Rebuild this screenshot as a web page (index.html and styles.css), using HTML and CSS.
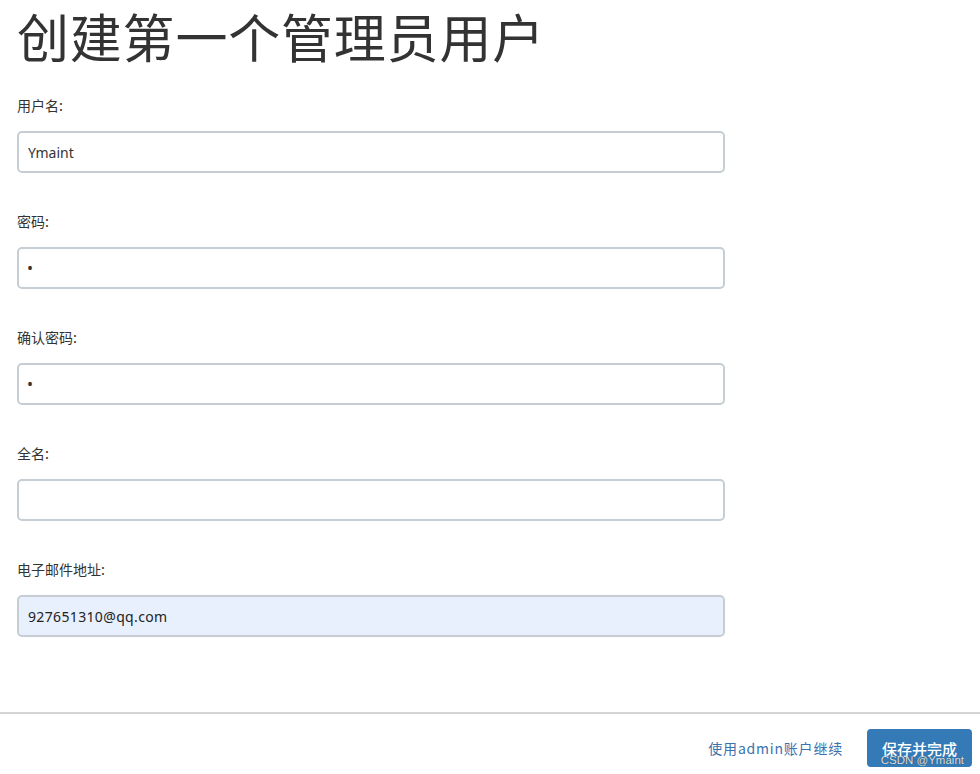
FILE: index.html
```html
<!DOCTYPE html>
<html lang="zh-CN">
<head>
<meta charset="utf-8">
<title>创建第一个管理员用户</title>
<link rel="stylesheet" href="styles.css">
</head>
<body>
<div class="page">
  <main class="content">
    <h1 class="title">创建第一个管理员用户</h1>
    <form class="form">
      <div class="field">
        <label class="label">用户名:</label>
        <input class="input" type="text" value="Ymaint">
      </div>
      <div class="field">
        <label class="label">密码:</label>
        <input class="input" type="password" value="a">
      </div>
      <div class="field">
        <label class="label">确认密码:</label>
        <input class="input" type="password" value="a">
      </div>
      <div class="field">
        <label class="label">全名:</label>
        <input class="input" type="text" value="">
      </div>
      <div class="field">
        <label class="label">电子邮件地址:</label>
        <input class="input input-autofill" type="text" value="927651310@qq.com">
      </div>
    </form>
  </main>
  <footer class="footer">
    <a class="link" href="#">使用admin账户继续</a>
    <button class="btn" type="button">保存并完成</button>
    <span class="watermark">CSDN @Ymaint</span>
  </footer>
</div>
</body>
</html>
```
FILE: styles.css
```css
* { box-sizing: border-box; }
html, body {
  margin: 0;
  padding: 0;
  background: #fff;
}
body {
  font-family: "Noto Sans", "Noto Sans CJK SC", sans-serif;
  color: #333;
  font-size: 14px;
}
.page {
  width: 980px;
  height: 774px;
  position: relative;
  display: flex;
  flex-direction: column;
}
.content {
  padding: 0 0 0 17px;
  height: 712px;
}
.title {
  margin: 0;
  font-family: "Noto Sans CJK SC", sans-serif;
  font-weight: 400;
  font-size: 52px;
  line-height: 72px;
  color: #333;
  letter-spacing: 0.8px;
}
.form {
  display: flex;
  flex-direction: column;
  gap: 38px;
  margin-top: 23px;
  width: 708px;
}
.field {
  display: flex;
  flex-direction: column;
  gap: 16px;
}
.label {
  font-family: "Noto Sans CJK SC", sans-serif;
  font-size: 14px;
  line-height: 20px;
  height: 20px;
  color: #333;
}
.input {
  height: 42px;
  width: 100%;
  border: 2px solid #c6ced3;
  border-radius: 5px;
  padding: 0 9px;
  font-family: "Noto Sans", "Noto Sans CJK SC", sans-serif;
  font-size: 14px;
  color: #333;
  background: #fff;
  outline: none;
}
.input[type="password"] {
  font-size: 16px;
  letter-spacing: 1px;
  padding-left: 8px;
}
.input-autofill {
  background: #e8f0fe;
  color: #222;
  letter-spacing: 0.35px;
}
.footer {
  border-top: 2px solid #d4d4d4;
  display: flex;
  justify-content: flex-end;
  align-items: flex-start;
  gap: 24px;
  padding: 15px 8px 0 0;
  height: 62px;
}
.link {
  font-family: "Noto Sans CJK SC", sans-serif;
  font-size: 14px;
  letter-spacing: 0.8px;
  color: #3b72ad;
  text-decoration: none;
  line-height: 38px;
}
.btn {
  width: 105px;
  height: 38px;
  border: none;
  border-radius: 4px;
  background: #337ab7;
  color: #fff;
  font-family: "Noto Sans CJK SC", sans-serif;
  font-size: 15px;
  font-weight: 500;
  padding: 0;
}
.watermark {
  position: absolute;
  right: 16px;
  bottom: 8px;
  font-family: "Liberation Sans", sans-serif;
  font-size: 11.5px;
  line-height: 12px;
  color: rgba(230, 230, 230, 0.95);
  text-shadow: 0 0 1px rgba(50, 50, 50, 0.7);
}
```
